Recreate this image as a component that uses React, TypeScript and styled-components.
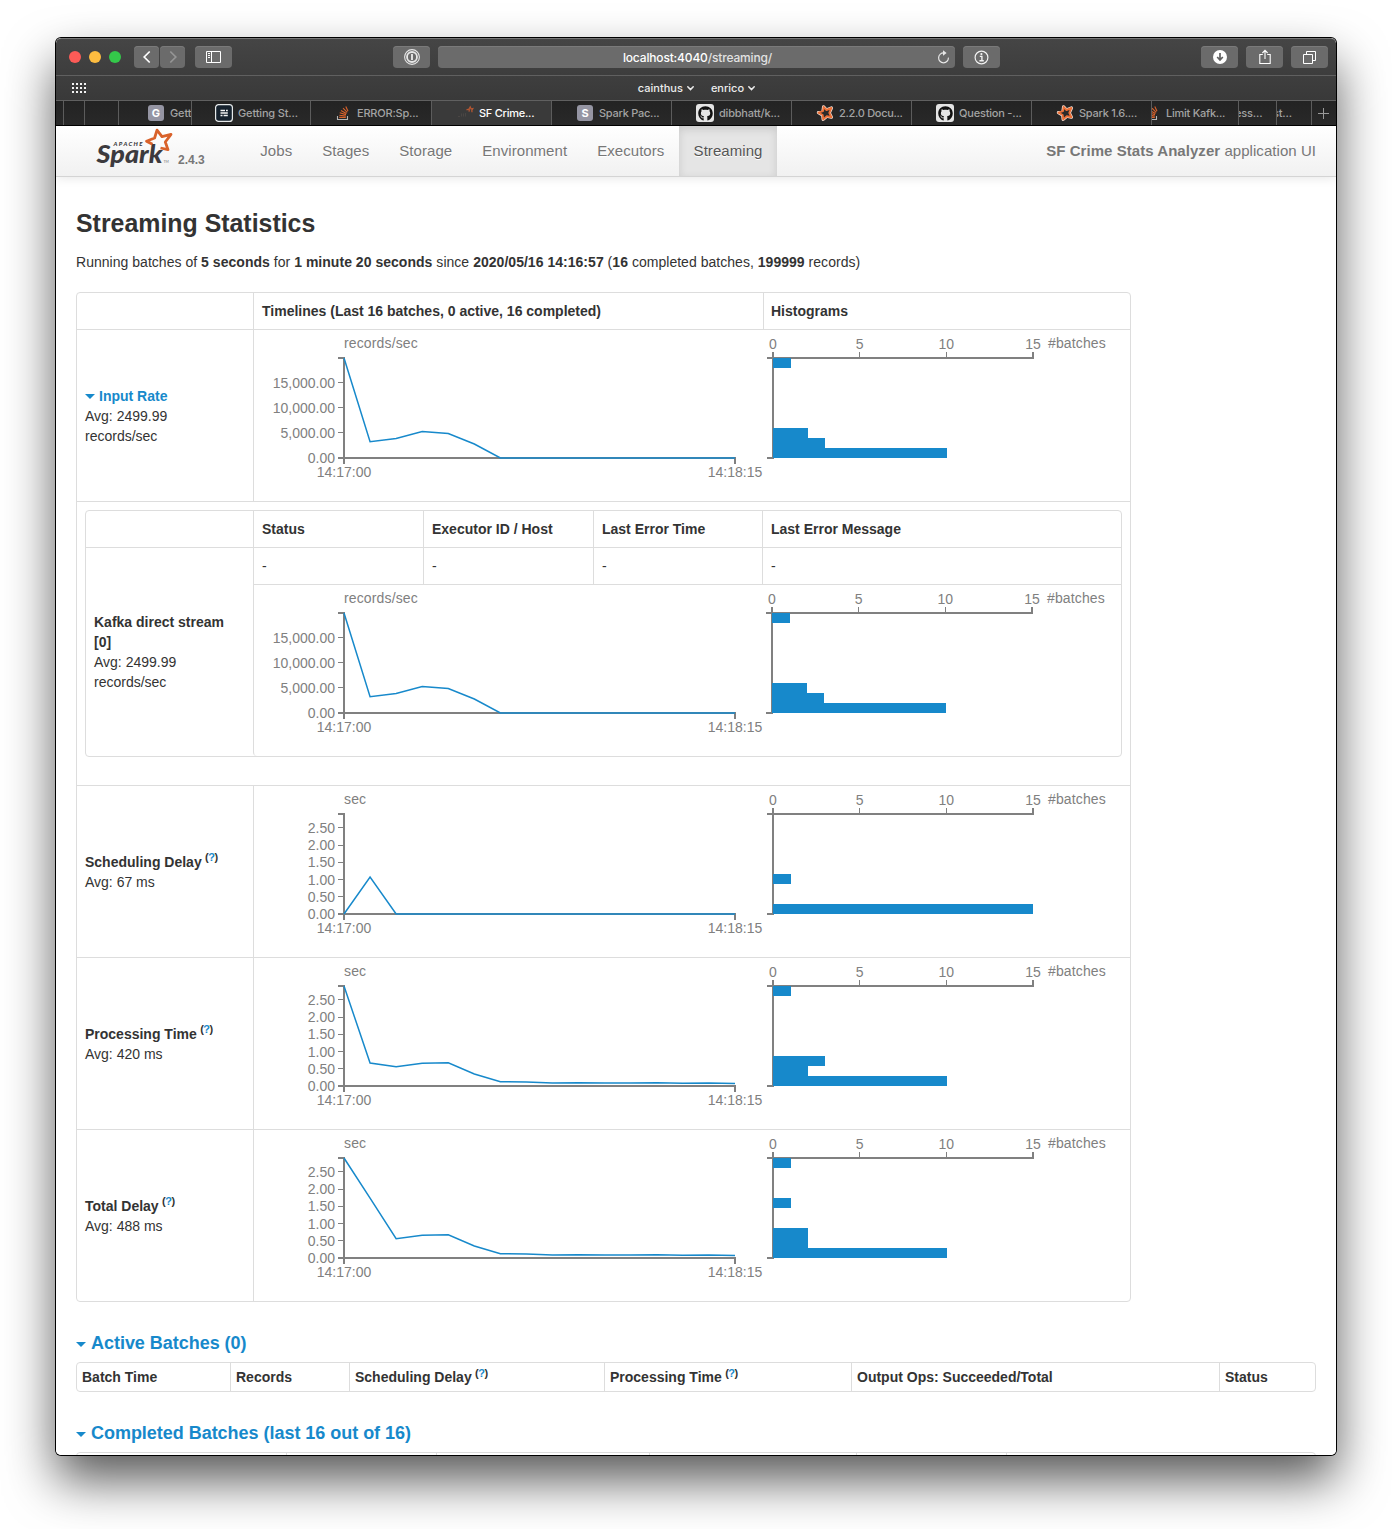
import React from "react";
import styled, { createGlobalStyle } from "styled-components";
import { FaGithub } from "react-icons/fa";

const BLUE = "#1789cb";
const AXIS = "#808080";
const LINE = "#dddddd";
const PAGE_FONT = `"Liberation Sans", Arial, sans-serif`;
const UI_FONT = `Inter, "Liberation Sans", sans-serif`;

const GlobalStyle = createGlobalStyle`
  * { box-sizing: border-box; }
  body { margin: 0; background: #fff; }
`;

/* ---------- window ---------- */

const Desktop = styled.div`
  height: 1529px;
  padding: 38px 56px 0;
  overflow: hidden;
  background: #fff;
`;

const Window = styled.div`
  width: 1280px;
  height: 1417px;
  display: flex;
  flex-direction: column;
  overflow: hidden;
  background: #fff;
  border-radius: 5px;
  box-shadow: 0 0 0 1px #000, 0 25px 50px rgba(0, 0, 0, 0.66);
`;

const Toolbar = styled.div`
  height: 38px;
  flex: none;
  display: flex;
  align-items: center;
  padding: 0 8px 0 13px;
  background: linear-gradient(#454545, #3d3d3d);
  border-top: 1px solid #777;
  border-bottom: 1px solid #606060;
  border-radius: 5px 5px 0 0;
`;

const Lights = styled.div`
  display: flex;
  gap: 8px;
  margin-right: 13px;
`;

const Light = styled.span<{ $color: string }>`
  width: 12px;
  height: 12px;
  border-radius: 50%;
  background: ${(p) => p.$color};
`;

const ToolButton = styled.button<{ $width?: number; $gap?: number }>`
  width: ${(p) => p.$width ?? 37}px;
  height: 22px;
  flex: none;
  display: flex;
  align-items: center;
  justify-content: center;
  margin: 0 0 0 ${(p) => p.$gap ?? 8}px;
  padding: 0;
  border: 0;
  border-radius: 4px;
  background: #6b6b6b;
  box-shadow: inset 0 1px 0 #7a7a7a;
  color: #fff;
`;

const Address = styled.div`
  width: 517px;
  height: 22px;
  display: grid;
  grid-template-columns: 24px 1fr 24px;
  align-items: center;
  justify-items: center;
  margin-left: 8px;
  border-radius: 4px;
  background: #6b6b6b;
  box-shadow: inset 0 1px 0 #7a7a7a;
  font: 500 12px/22px ${UI_FONT};
  letter-spacing: -0.16px;
  color: #fff;
  & span { color: #e2e2e2; }
  & svg { margin-top: -2px; }
`;

const UrlText = styled.div`
  padding: 1px 0 0 2px;
`;

const Favorites = styled.div`
  height: 25px;
  flex: none;
  display: grid;
  grid-template-columns: 1fr auto 1fr;
  align-items: center;
  padding: 0 16px;
  background: linear-gradient(#3e3e3e, #393939);
  border-bottom: 1px solid #606060;
`;

const FavLinks = styled.div`
  display: flex;
  gap: 17px;
  padding-left: 1px;
`;

const FavLink = styled.span`
  display: flex;
  align-items: center;
  gap: 4px;
  font: 500 11px/24px ${UI_FONT};
  color: #ececec;
`;

const TabBar = styled.div`
  height: 25px;
  flex: none;
  display: flex;
  background: linear-gradient(#232323, #292929);
  border-bottom: 1px solid #000;
`;

const Tab = styled.div<{ $width: number; $active?: boolean }>`
  width: ${(p) => p.$width}px;
  flex: none;
  display: flex;
  align-items: center;
  overflow: hidden;
  border-right: 1px solid #5c5c5c;
  background: ${(p) => (p.$active ? "#3a3a3a" : "transparent")};
  color: ${(p) => (p.$active ? "#fff" : "#a3a3a3")};
  font: 500 11px/24px ${UI_FONT};
  white-space: nowrap;
`;

const TabContent = styled.div<{ $shift: number }>`
  flex: none;
  display: flex;
  align-items: center;
  gap: 5px;
  margin-left: ${(p) => p.$shift}px;
`;

const TabLabel = styled.span<{ $spacing?: number }>`
  letter-spacing: ${(p) => p.$spacing ?? -0.15}px;
`;

const TabIcon = styled.span`
  width: 18px;
  height: 18px;
  display: flex;
  align-items: center;
  justify-content: center;
`;

const LetterIcon = styled.span`
  width: 16px;
  height: 16px;
  border-radius: 3px;
  background: #9595a3;
  color: #fff;
  font: 700 11px/16px ${UI_FONT};
  text-align: center;
`;

const GithubTile = styled.span`
  width: 18px;
  height: 18px;
  display: flex;
  align-items: center;
  justify-content: center;
  border-radius: 3px;
  background: #e4e4e4;
  color: #111;
`;

const NewTab = styled.div`
  flex: 1;
  display: flex;
  align-items: center;
  justify-content: center;
  padding-right: 1px;
`;

/* ---------- spark page ---------- */

const Page = styled.div`
  flex: 1;
  overflow: hidden;
  background: #fff;
  color: #333;
  font: 14px/20px ${PAGE_FONT};
`;

const Navbar = styled.nav`
  height: 51px;
  display: flex;
  padding: 0 20px 0 40px;
  background: linear-gradient(#fff, #f1f1f1);
  border-bottom: 1px solid #d4d4d4;
  box-shadow: 0 1px 10px rgba(0, 0, 0, 0.1);
  color: #777;
  font-size: 15px;
  line-height: 50px;
`;

const Brand = styled.div`
  width: 149.3px;
  display: flex;
`;

const Version = styled.span`
  padding: 24px 0 0 4px;
  font-weight: 700;
  font-size: 12px;
  line-height: 21px;
`;

const NavLink = styled.span<{ $active?: boolean }>`
  padding: 0 ${(p) => (p.$active ? 14.2 : 15)}px 0 ${(p) => (p.$active ? 14.2 : 15)}px;
  letter-spacing: 0.06px;
  text-shadow: 0 1px 0 #fff;
  color: ${(p) => (p.$active ? "#555" : "#777")};
  background: ${(p) => (p.$active ? "#e5e5e5" : "transparent")};
  box-shadow: ${(p) => (p.$active ? "inset 0 3px 8px rgba(0,0,0,.125)" : "none")};
`;

const AppName = styled.span`
  margin-left: auto;
  letter-spacing: 0.05px;
`;

const Content = styled.main`
  padding: 26px 20px 0;
`;

const Title = styled.h3`
  margin: 0 0 9px;
  font-size: 24.9px;
  line-height: 40px;
`;

const Summary = styled.p`
  margin: 0 0 20px;
  letter-spacing: 0.03px;
`;

const StatTable = styled.div`
  width: 1055px;
  border: 1px solid ${LINE};
  border-radius: 4px;
`;

const StatRow = styled.div<{ $height: number }>`
  height: ${(p) => p.$height}px;
  display: grid;
  grid-template-columns: 176px 510px 367px;
  & + & { border-top: 1px solid ${LINE}; }
`;

const HeadCell = styled.div`
  padding: 8px;
  font-weight: 700;
  & + & { border-left: 1px solid ${LINE}; }
`;

const HistogramHead = styled.div`
  padding: 8px 7px;
  font-weight: 700;
  border-left: 1px solid ${LINE};
`;

const LabelCell = styled.div`
  display: flex;
  flex-direction: column;
  justify-content: center;
  padding: 0 8px;
`;

const ChartCell = styled.div<{ $divided?: boolean }>`
  border-left: 1px solid ${(p) => (p.$divided ? LINE : "transparent")};
  & > svg { display: block; overflow: visible; }
`;

const Nest = styled.div`
  height: 285px;
  padding: 8px;
  border-top: 1px solid ${LINE};
  border-bottom: 1px solid ${LINE};
`;

const NestTable = styled.div`
  width: 1037px;
  height: 247px;
  display: grid;
  grid-template-columns: 167px 170px 170px 169px 359px;
  grid-template-rows: 36px 37px 172px;
  border: 1px solid ${LINE};
  border-radius: 4px;
`;

const NestCell = styled.div<{ $head?: boolean; $first?: boolean }>`
  padding: 8px;
  font-weight: ${(p) => (p.$head ? 700 : 400)};
  border-left: ${(p) => (p.$first ? "0" : `1px solid ${LINE}`)};
  border-top: ${(p) => (p.$head ? "0" : `1px solid ${LINE}`)};
`;

const NestLabel = styled.div`
  grid-row: 2 / 4;
  display: flex;
  flex-direction: column;
  justify-content: center;
  padding: 0 8px;
  border-top: 1px solid ${LINE};
`;

const NestTimeline = styled.div`
  grid-column: span 3;
  border-top: 1px solid ${LINE};
  border-left: 1px solid ${LINE};
  border-bottom-left-radius: 4px;
  & > svg { display: block; overflow: visible; }
`;

const NestHistogram = styled.div`
  padding-left: 1px;
  border-top: 1px solid ${LINE};
  & > svg { display: block; overflow: visible; }
`;

const LinkLabel = styled.div`
  display: flex;
  align-items: center;
  gap: 4px;
  font-weight: 700;
  color: ${BLUE};
`;

const Arrow = styled.i<{ $drop?: number }>`
  width: 0;
  height: 0;
  margin-top: ${(p) => p.$drop ?? 1}px;
  border: 5px solid transparent;
  border-top-color: ${BLUE};
  border-bottom: 0;
`;

const Hint = styled.sup`
  position: relative;
  top: -0.48em;
  margin-left: -0.5px;
  font-size: 11px;
  line-height: 0;
  letter-spacing: -0.5px;
  vertical-align: baseline;
  font-weight: 700;
  & a { color: ${BLUE}; }
`;

const SectionTitle = styled.h4`
  display: flex;
  align-items: center;
  gap: 5px;
  margin: 31px 0 9px;
  font-size: 18px;
  line-height: 20px;
  letter-spacing: -0.03px;
  color: ${BLUE};
`;

const BatchTable = styled.div<{ $columns: string }>`
  display: grid;
  grid-template-columns: ${(p) => p.$columns};
  height: 30px;
  border: 1px solid ${LINE};
  border-radius: 4px;
`;

const BatchCell = styled.div`
  padding: 4px 5px;
  font-weight: 700;
  white-space: nowrap;
  & + & { border-left: 1px solid ${LINE}; }
`;

const ChartText = styled.text<{ $wide?: boolean }>`
  fill: ${AXIS};
  font: 14px ${PAGE_FONT};
  letter-spacing: ${(p) => (p.$wide ? 0.14 : 0)}px;
`;

/* ---------- charts ---------- */

type Ticks = { value: number; label: string }[];

const TOP = 28;
const BOTTOM = 128;

function Timeline({ unit, ticks, max, points }: { unit: string; ticks: Ticks; max: number; points: number[] }) {
  const x0 = 90;
  const width = 391;
  const step = width / 15;
  const path = points.map((p, i) => `${i ? "L" : "M"}${(x0 + i * step).toFixed(2)} ${(BOTTOM - p).toFixed(2)}`).join("");
  return (
    <svg width={509} height={171}>
      <ChartText $wide x={x0} y={18}>{unit}</ChartText>
      <path d={`M${x0} ${BOTTOM + 6}V${BOTTOM}H${x0 + width}V${BOTTOM + 6}`} fill="none" stroke={AXIS} strokeWidth={2} />
      <path d={`M${x0 - 6} ${TOP}H${x0}V${BOTTOM}H${x0 - 6}`} fill="none" stroke={AXIS} strokeWidth={2} />
      {ticks.map(({ value, label }) => {
        const y = BOTTOM - (value / max) * 100;
        return (
          <g key={label}>
            {value > 0 && <path d={`M${x0 - 6} ${Math.floor(y) + 0.5}H${x0}`} stroke={AXIS} />}
            <ChartText x={x0 - 9} y={Math.round(y + 5)} textAnchor="end">{label}</ChartText>
          </g>
        );
      })}
      <ChartText x={x0} y={147} textAnchor="middle">14:17:00</ChartText>
      <ChartText x={x0 + width} y={147} textAnchor="middle">14:18:15</ChartText>
      <path d={path} fill="none" stroke={BLUE} strokeWidth={1.5} />
    </svg>
  );
}

function Histogram({ bars }: { bars: [number, number][] }) {
  const x0 = 9;
  const unit = 260 / 15;
  return (
    <svg width={350} height={171}>
      <path d={`M${x0} ${TOP - 6}V${TOP}H${x0 + 260}V${TOP - 6}`} fill="none" stroke={AXIS} strokeWidth={2} />
      <path d={`M${x0 - 6} ${TOP}H${x0}V${BOTTOM}H${x0 - 6}`} fill="none" stroke={AXIS} strokeWidth={2} />
      {[5, 10].map((n) => (
        <path key={n} d={`M${Math.floor(x0 + n * unit) + 0.5} ${TOP - 6}V${TOP}`} stroke={AXIS} />
      ))}
      {[0, 5, 10, 15].map((n) => (
        <ChartText key={n} x={x0 + n * unit} y={19} textAnchor="middle">{n}</ChartText>
      ))}
      <ChartText $wide x={284} y={18}>#batches</ChartText>
      {bars.map(([slot, count]) => (
        <rect key={slot} x={x0} y={TOP + slot * 10} width={count === 15 ? 260 : Math.ceil(count * unit)} height={10} fill={BLUE} />
      ))}
    </svg>
  );
}

const rateTicks: Ticks = [
  { value: 0, label: "0.00" },
  { value: 5000, label: "5,000.00" },
  { value: 10000, label: "10,000.00" },
  { value: 15000, label: "15,000.00" },
];
const secTicks: Ticks = [0, 0.5, 1, 1.5, 2, 2.5].map((value) => ({ value, label: value.toFixed(2) }));
const zeros = (n: number) => Array<number>(n).fill(0);
const tail = [12, 4.2, 4, 3, 3.3, 3, 3, 3.2, 2.8, 3, 2.5];

const rate = { unit: "records/sec", ticks: rateTicks, max: 19999, points: [100, 16.3, 19.5, 26.4, 24.5, 14, ...zeros(10)] };
const rateBars: [number, number][] = [[0, 1], [7, 2], [8, 3], [9, 10]];

const delayRows: { name: string; avg: string; points: number[]; bars: [number, number][] }[] = [
  { name: "Scheduling Delay", avg: "67 ms", points: [0, 37, ...zeros(14)], bars: [[6, 1], [9, 15]] },
  { name: "Processing Time", avg: "420 ms", points: [100, 22.9, 19.3, 22.7, 23.2, ...tail], bars: [[0, 1], [7, 3], [8, 2], [9, 10]] },
  { name: "Total Delay", avg: "488 ms", points: [100, 59.8, 19.3, 22.7, 23.2, ...tail], bars: [[0, 1], [4, 1], [7, 2], [8, 2], [9, 10]] },
];

function Question() {
  return <Hint>(<a>?</a>)</Hint>;
}

/* ---------- drawings ---------- */

const Chevron = () => (
  <svg width={7} height={5}><path d="M.8 .8L3.5 3.6L6.2 .8" fill="none" stroke="#ececec" strokeWidth={1.5} strokeLinecap="round" /></svg>
);

const StackOverflow = () => (
  <svg width={18} height={18} viewBox="0 0 18 18" fill="none">
    <path d="M3.5 12V15.5H13.5V12" stroke="#b5b5b5" strokeWidth={1.1} />
    <path d="M5.2 13.4H11.8M5.3 11.2L11.8 12M5.7 8.8L12 10.6M6.9 6.4L12.5 9.5M9 4.2L13.2 8.4M11.8 2.4L14 7.2" stroke="#d9622b" strokeWidth={1.1} />
  </svg>
);

const STAR = "M7.6 2.8L10.5 6L15.4 4L13.3 8.9L15.4 13.2L10.8 12.3L7.2 15.4L6.7 11L2.4 8.6L7 7.2Z";

const SparkFavicon = () => (
  <svg width={18} height={18} viewBox="0 0 18 18" strokeLinejoin="round">
    <path d={STAR} fill="none" stroke="#f3e6df" strokeWidth={3.2} />
    <path d={STAR} fill="#2a2a2a" stroke="#ea7038" strokeWidth={1.9} />
  </svg>
);

const SparkMini = () => (
  <svg width={18} height={18} viewBox="0 0 18 18">
    <path d="M10.5 5.8L13 5L14.2 3L15 4.8L16.8 4.6L15.8 6.4L16 8.2M13.4 5.2L13 7.6" fill="none" stroke="#b35632" strokeWidth={1.3} />
    <path d="M2 12.5H4M5.5 9.5V12.5M7.5 9.5V12.5M9.5 9V12.5" stroke="#4a4644" />
  </svg>
);

const CardIcon = () => (
  <svg width={18} height={18} viewBox="0 0 18 18">
    <rect x={0.6} y={0.6} width={16.8} height={16.8} rx={3} fill="#16222e" stroke="#e6e9ea" strokeWidth={1.2} />
    <path d="M5.5 6.5H10M11 6.5H12.8M5.5 9H12.8M5.5 11.5H7.5M8.6 11.5H12.8" stroke="#f4f4f4" strokeWidth={1.6} />
  </svg>
);

const SparkLogo = () => (
  <svg width={78} height={50} viewBox="96 126 78 50">
    <text x={96.5} y={162.5} fontFamily="Lato, sans-serif" fontStyle="italic" fontWeight={900} fontSize={24.5} textLength={66} lengthAdjust="spacingAndGlyphs" fill="#3c3a3e">Spark</text>
    <text x={113.5} y={146} fontFamily="Lato, sans-serif" fontStyle="italic" fontWeight={900} fontSize={6} textLength={29} fill="#3c3a3e">APACHE</text>
    <path d="M152.5 144.3L146.5 141.2L154.6 138L157 130.2L162 136.7L171 134.4L165.3 142L168 149.6L160.5 148" fill="none" stroke="#d9622b" strokeWidth={2.8} strokeLinejoin="round" />
    <text x={163.5} y={162.5} fontFamily="Lato, sans-serif" fontSize={3.5} fill="#777">TM</text>
  </svg>
);

const tabs: { width: number; shift: number; label: string; icon?: React.ReactNode; active?: boolean; spacing?: number }[] = [
  { width: 8, shift: 0, label: "" },
  { width: 21, shift: 0, label: "" },
  { width: 34, shift: 0, label: "" },
  { width: 73, shift: 28, label: "Getting", icon: <LetterIcon>G</LetterIcon> },
  { width: 119, shift: 23, label: "Getting St...", icon: <CardIcon /> },
  { width: 121, shift: 23, label: "ERROR:Sp...", icon: <StackOverflow />, spacing: -0.2 },
  { width: 120, shift: 24, label: "SF Crime...", icon: <SparkMini />, active: true, spacing: -0.25 },
  { width: 120, shift: 24, label: "Spark Pac...", icon: <LetterIcon>S</LetterIcon>, spacing: -0.25 },
  { width: 120, shift: 24, label: "dibbhatt/k...", icon: <GithubTile><FaGithub size={15} /></GithubTile>, spacing: -0.2 },
  { width: 120, shift: 24, label: "2.2.0 Docu...", icon: <SparkFavicon />, spacing: -0.3 },
  { width: 120, shift: 24, label: "Question -...", icon: <GithubTile><FaGithub size={15} /></GithubTile>, spacing: -0.2 },
  { width: 120, shift: 24, label: "Spark 1.6....", icon: <SparkFavicon />, spacing: -0.25 },
  { width: 87, shift: -9, label: "Limit Kafk...", icon: <StackOverflow />, spacing: -0.25 },
  { width: 38, shift: -4, label: "ess..." },
  { width: 35, shift: -4, label: "st..." },
];

export default function App() {
  return (
    <Desktop>
      <GlobalStyle />
      <Window>
        <Toolbar>
          <Lights>
            <Light $color="#fc5b57" />
            <Light $color="#fdbc40" />
            <Light $color="#34c84a" />
          </Lights>
          <ToolButton $width={25} $gap={0}>
            <svg width={12} height={14}><path d="M8.7 1.5L3.2 7L8.7 12.5" fill="none" stroke="#fff" strokeWidth={1.7} /></svg>
          </ToolButton>
          <ToolButton $width={25} $gap={1}>
            <svg width={12} height={14}><path d="M3.3 1.5L8.8 7L3.3 12.5" fill="none" stroke="#959595" strokeWidth={1.7} /></svg>
          </ToolButton>
          <ToolButton $gap={10}>
            <svg width={15} height={12} fill="none" stroke="#fff"><path d="M.5 .5H14.5V11.5H.5ZM5.5 .5V11.5M2 2.5H4M2 4.5H4M2 6.5H4" /></svg>
          </ToolButton>
          <ToolButton $gap={161}>
            <svg width={18} height={18} viewBox="0 0 18 18" fill="none" stroke="#e6e6e6">
              <circle cx={9} cy={9} r={7.4} strokeWidth={1.1} />
              <circle cx={9} cy={9} r={5} strokeWidth={1.8} />
              <path d="M9 6V12" strokeWidth={1.9} />
            </svg>
          </ToolButton>
          <Address>
            <i />
            <UrlText>localhost:4040<span>/streaming/</span></UrlText>
            <svg width={13} height={14} viewBox="0 0 13 14">
              <path d="M7 3A4.9 4.9 0 1 0 11.4 7.6" fill="none" stroke="#e6e6e6" strokeWidth={1.2} />
              <path d="M6 .3L9.6 3L6 5.7Z" fill="#e6e6e6" />
            </svg>
          </Address>
          <ToolButton>
            <svg width={15} height={15} viewBox="0 0 15 15" fill="none" stroke="#f2f2f2">
              <circle cx={7.5} cy={7.5} r={6.4} strokeWidth={1.2} />
              <path d="M5.8 6.4H7.9V10.5M5.4 10.8H9.8" strokeWidth={1.4} />
              <circle cx={7.4} cy={4.1} r={1.1} fill="#f2f2f2" stroke="none" />
            </svg>
          </ToolButton>
          <ToolButton $gap={201}>
            <svg width={14} height={14} viewBox="0 0 14 14">
              <circle cx={7} cy={7} r={7} fill="#fff" />
              <path d="M7 3V9.5M4.2 7L7 10L9.8 7" fill="none" stroke="#606060" strokeWidth={1.7} />
            </svg>
          </ToolButton>
          <ToolButton>
            <svg width={12} height={16} viewBox="0 0 12 16" fill="none" stroke="#fff">
              <path d="M3.8 5.5H.8V14.5H11.2V5.5H8.2M6 10V1.5M3.4 4L6 1.3L8.6 4" strokeWidth={1.1} />
            </svg>
          </ToolButton>
          <ToolButton>
            <svg width={13} height={13} fill="none" stroke="#fff"><path d="M.5 3.5H9.5V12.5H.5ZM3.5 3.5V.5H12.5V9.5H9.5" /></svg>
          </ToolButton>
        </Toolbar>

        <Favorites>
          <svg width={14} height={10} fill="#f2f2f2">
            {[0, 4, 8].map((y) => [0, 4, 8, 12].map((x) => <rect key={`${x}-${y}`} x={x} y={y} width={2} height={2} />))}
          </svg>
          <FavLinks>
            <FavLink>cainthus <Chevron /></FavLink>
            <FavLink>enrico <Chevron /></FavLink>
          </FavLinks>
        </Favorites>

        <TabBar>
          {tabs.map((t, i) => (
            <Tab key={i} $width={t.width} $active={t.active}>
              <TabContent $shift={t.shift}>
                {t.icon && <TabIcon>{t.icon}</TabIcon>}
                <TabLabel $spacing={t.spacing}>{t.label}</TabLabel>
              </TabContent>
            </Tab>
          ))}
          <NewTab>
            <svg width={11} height={11}><path d="M5.5 0V11M0 5.5H11" stroke="#999" /></svg>
          </NewTab>
        </TabBar>

        <Page>
          <Navbar>
            <Brand>
              <SparkLogo />
              <Version>2.4.3</Version>
            </Brand>
            {["Jobs", "Stages", "Storage", "Environment", "Executors", "Streaming"].map((name) => (
              <NavLink key={name} $active={name === "Streaming"}>{name}</NavLink>
            ))}
            <AppName><b>SF Crime Stats Analyzer</b> application UI</AppName>
          </Navbar>

          <Content>
            <Title>Streaming Statistics</Title>
            <Summary>
              Running batches of <b>5 seconds</b> for <b>1 minute 20 seconds</b> since <b>2020/05/16 14:16:57</b> (<b>16</b> completed batches, <b>199999</b> records)
            </Summary>

            <StatTable>
              <StatRow $height={36}>
                <HeadCell />
                <HeadCell>Timelines (Last 16 batches, 0 active, 16 completed)</HeadCell>
                <HistogramHead>Histograms</HistogramHead>
              </StatRow>
              <StatRow $height={172}>
                <LabelCell>
                  <LinkLabel><Arrow />Input Rate</LinkLabel>
                  <div>Avg: 2499.99<br />records/sec</div>
                </LabelCell>
                <ChartCell $divided><Timeline {...rate} /></ChartCell>
                <ChartCell><Histogram bars={rateBars} /></ChartCell>
              </StatRow>
              <Nest>
                <NestTable>
                  <NestCell $head $first />
                  <NestCell $head>Status</NestCell>
                  <NestCell $head>Executor ID / Host</NestCell>
                  <NestCell $head>Last Error Time</NestCell>
                  <NestCell $head>Last Error Message</NestCell>
                  <NestLabel>
                    <b>Kafka direct stream<br />[0]</b>
                    <div>Avg: 2499.99<br />records/sec</div>
                  </NestLabel>
                  <NestCell>-</NestCell>
                  <NestCell>-</NestCell>
                  <NestCell>-</NestCell>
                  <NestCell>-</NestCell>
                  <NestTimeline><Timeline {...rate} /></NestTimeline>
                  <NestHistogram><Histogram bars={rateBars} /></NestHistogram>
                </NestTable>
              </Nest>
              {delayRows.map((row, i) => (
                <StatRow key={row.name} $height={i === 0 ? 171 : 172}>
                  <LabelCell>
                    <div><b>{row.name}</b> <Question /></div>
                    <div>Avg: {row.avg}</div>
                  </LabelCell>
                  <ChartCell $divided><Timeline unit="sec" ticks={secTicks} max={2.904} points={row.points} /></ChartCell>
                  <ChartCell><Histogram bars={row.bars} /></ChartCell>
                </StatRow>
              ))}
            </StatTable>

            <SectionTitle><Arrow $drop={3} />Active Batches (0)</SectionTitle>
            <BatchTable $columns="153px 119px 255px 247px 368px 96px">
              <BatchCell>Batch Time</BatchCell>
              <BatchCell>Records</BatchCell>
              <BatchCell>Scheduling Delay <Question /></BatchCell>
              <BatchCell>Processing Time <Question /></BatchCell>
              <BatchCell>Output Ops: Succeeded/Total</BatchCell>
              <BatchCell>Status</BatchCell>
            </BatchTable>

            <SectionTitle><Arrow $drop={3} />Completed Batches (last 16 out of 16)</SectionTitle>
            <BatchTable $columns="209px 150px 213px 207px 150px 309px">
              <BatchCell />
              <BatchCell />
              <BatchCell />
              <BatchCell />
              <BatchCell />
              <BatchCell />
            </BatchTable>
          </Content>
        </Page>
      </Window>
    </Desktop>
  );
}
